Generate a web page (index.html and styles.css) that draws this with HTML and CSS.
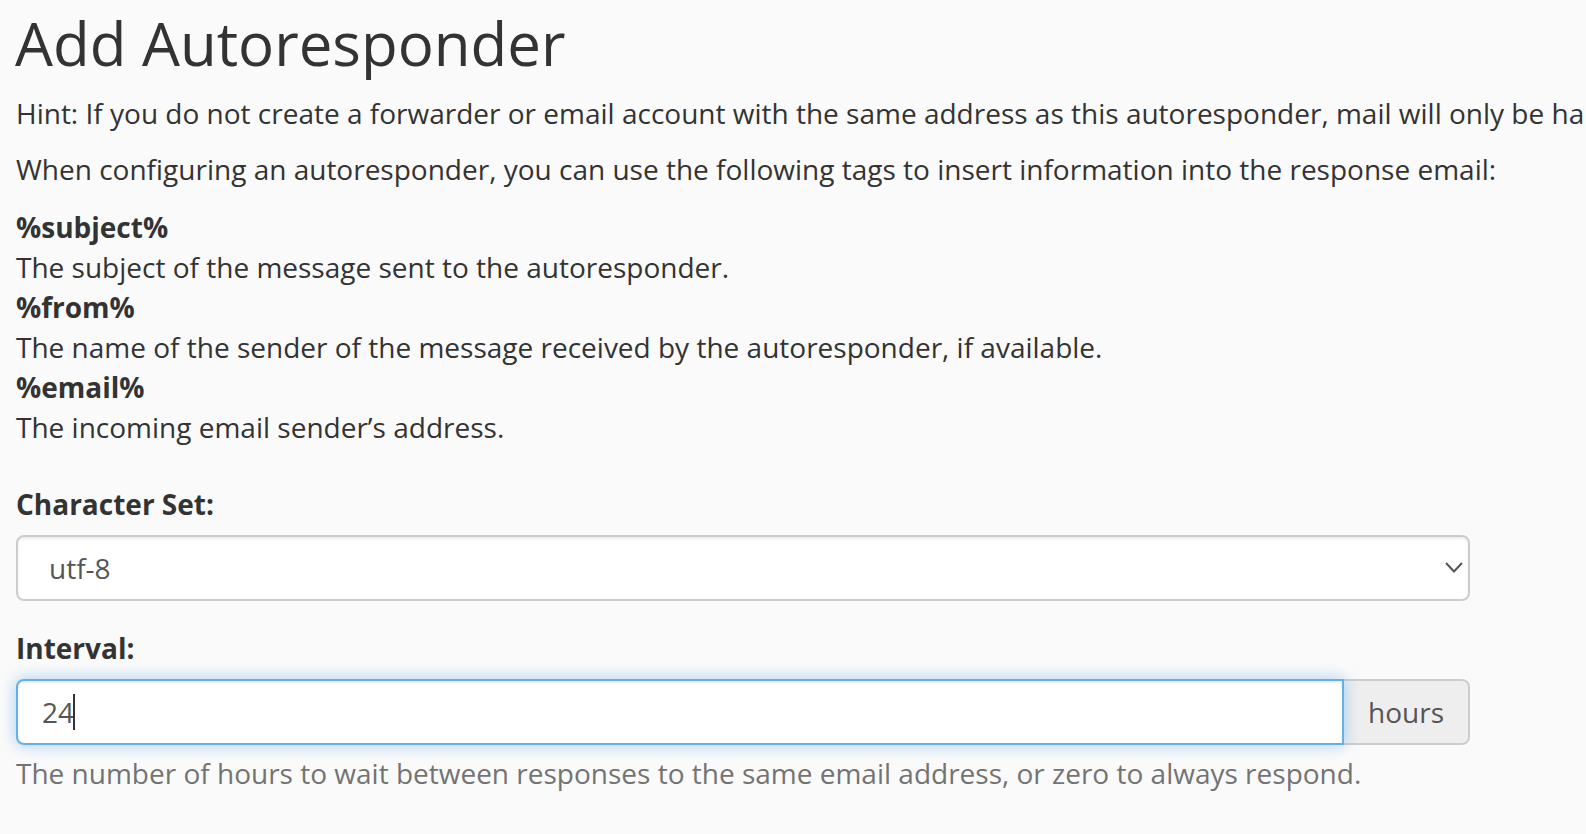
FILE: index.html
```html
<!DOCTYPE html>
<html lang="en">
<head>
<meta charset="utf-8">
<title>Add Autoresponder</title>
<link rel="stylesheet" href="styles.css">
</head>
<body>
<div class="page">
  <h1 class="title">Add Autoresponder</h1>
  <p class="hint">Hint: If you do not create a forwarder or email account with the same address as this autoresponder, mail will only be handled by the autoresponder before it is discarded.</p>
  <p class="intro">When configuring an autoresponder, you can use the following tags to insert information into the response email:</p>
  <dl class="tags">
    <dt>%subject%</dt>
    <dd>The subject of the message sent to the autoresponder.</dd>
    <dt>%from%</dt>
    <dd>The name of the sender of the message received by the autoresponder, if available.</dd>
    <dt>%email%</dt>
    <dd>The incoming email sender’s address.</dd>
  </dl>
  <form class="form">
    <div class="group group-charset">
      <label class="label" for="charset">Character Set:</label>
      <div class="select-wrap">
        <select id="charset" class="control select">
          <option>utf-8</option>
        </select>
        <svg class="chevron" width="18" height="11" viewBox="0 0 18 11" aria-hidden="true"><polyline points="1,1 9,9.5 17,1" fill="none" stroke="#555" stroke-width="2"/></svg>
      </div>
    </div>
    <div class="group group-interval">
      <label class="label" for="interval">Interval:</label>
      <div class="input-group">
        <div class="input-wrap">
          <input id="interval" class="control input focused" type="text" value="24">
          <span class="caret"></span>
        </div>
        <span class="addon">hours</span>
      </div>
      <p class="help">The number of hours to wait between responses to the same email address, or zero to always respond.</p>
    </div>
  </form>
</div>
</body>
</html>
```
FILE: styles.css
```css
html, body {
  margin: 0;
  padding: 0;
  background: #fafafa;
  overflow: hidden;
}
body {
  font-family: "Open Sans", "DejaVu Sans", sans-serif;
  font-size: 28px;
  line-height: 40px;
  color: #333;
}
.page {
  padding: 7px 0 0 16px;
  width: 1570px;
}
.title {
  margin: 3px 0 17px -1px;
  font-size: 60px;
  line-height: 66px;
  font-weight: 400;
}
.hint,
.intro {
  margin: 0 0 16px;
  white-space: nowrap;
}
.tags {
  margin: 0;
  padding-top: 2px;
}
.tags dt {
  font-weight: 700;
}
.tags dd {
  margin: 0;
}
.form {
  width: 1454px;
  margin-top: 37px;
}
.label {
  display: block;
  font-weight: 700;
  margin-bottom: 11px;
}
.group-charset {
  margin-bottom: 27px;
}
.select-wrap {
  position: relative;
}
.control {
  display: block;
  box-sizing: border-box;
  width: 100%;
  height: 66px;
  margin: 0;
  font-family: "Open Sans", "DejaVu Sans", sans-serif;
  font-size: 28px;
  color: #555;
  background: #fff;
  border: 2px solid #ccc;
  border-radius: 8px;
  box-shadow: inset 0 2px 2px rgba(0, 0, 0, 0.075);
  outline: none;
}
.select {
  appearance: none;
  -webkit-appearance: none;
  padding: 0 60px 0 31px;
}
.chevron {
  position: absolute;
  right: 7px;
  top: 27px;
}
.input-group {
  display: flex;
}
.input-wrap {
  position: relative;
  flex: 1;
}
.input {
  padding: 0 24px;
  border-radius: 8px 0 0 8px;
}
.input.focused {
  border-color: #66afe9;
  box-shadow: inset 0 2px 2px rgba(0, 0, 0, 0.075), 0 0 16px rgba(102, 175, 233, 0.6);
}
.caret {
  position: absolute;
  left: 57px;
  top: 15px;
  width: 2px;
  height: 36px;
  background: #333;
}
.addon {
  display: flex;
  align-items: center;
  box-sizing: border-box;
  height: 66px;
  padding: 0 24px;
  background: #eee;
  color: #555;
  border: 2px solid #ccc;
  border-left: 0;
  border-radius: 0 8px 8px 0;
}
.help {
  margin: 8px 0 0;
  color: #737373;
  white-space: nowrap;
}
```
